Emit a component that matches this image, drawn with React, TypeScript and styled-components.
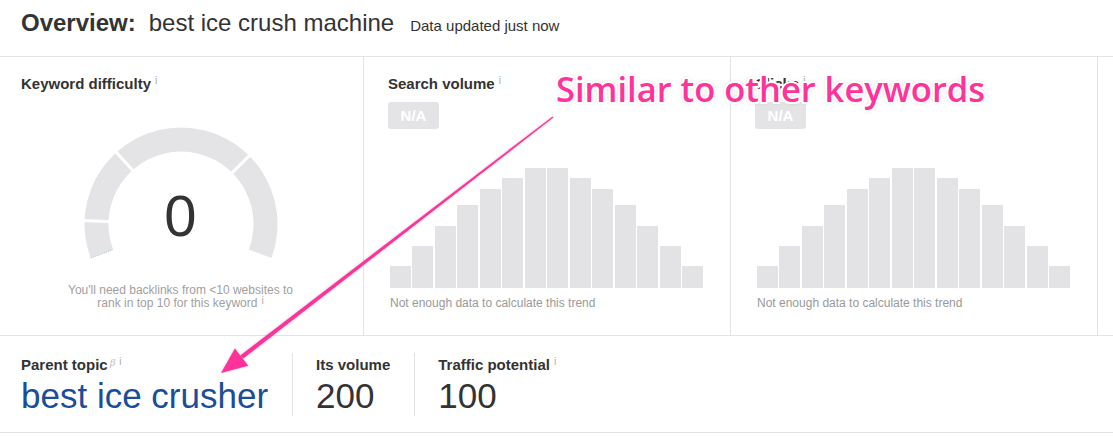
import React from "react";
import styled, { createGlobalStyle } from "styled-components";

const GlobalStyle = createGlobalStyle`
  html, body { margin: 0; padding: 0; background: #ffffff; }
  body { font-family: "Liberation Sans", Arial, sans-serif; color: #333333; }
  * { box-sizing: border-box; }
`;

const LINE = "#e3e3e3";
const BAR = "#e3e3e5";
const PINK = "#ff339a";

const Page = styled.div`
  position: relative;
  width: 1113px;
  height: 437px;
  overflow: hidden;
  background: #fff;
`;

const Header = styled.header`
  display: flex;
  align-items: baseline;
  height: 57px;
  padding: 9px 0 0 21px;
  border-bottom: 1px solid ${LINE};
  line-height: 27px;
`;

const TitleLabel = styled.span`
  font-size: 24px;
  font-weight: 700;
  color: #333;
`;

const TitleKeyword = styled.span`
  font-size: 24px;
  margin-left: 13px;
  color: #333;
`;

const TitleNote = styled.span`
  font-size: 15px;
  margin-left: 16px;
  color: #333;
`;

const PanelRow = styled.section`
  display: grid;
  grid-template-columns: 363px 367px 367px 1fr;
  height: 279px;
  border-bottom: 1px solid ${LINE};
`;

const Panel = styled.div<{ $first?: boolean; $center?: boolean }>`
  display: flex;
  flex-direction: column;
  align-items: ${(p) => (p.$center ? "stretch" : "flex-start")};
  padding: 18px ${(p) => (p.$first ? "23px" : "20px")} 0
    ${(p) => (p.$first ? "21px" : "24px")};
  border-left: ${(p) => (p.$first ? "none" : `1px solid ${LINE}`)};
`;

const PanelTitle = styled.div`
  font-size: 15px;
  line-height: 18px;
  font-weight: 700;
  color: #333;
  white-space: nowrap;
`;

const Info = styled.sup`
  font-size: 10px;
  font-weight: 400;
  color: #aaa;
  margin-left: 4px;
  vertical-align: top;
  position: relative;
  top: -3px;
`;

const GaugeWrap = styled.div`
  position: relative;
  align-self: center;
  width: 200px;
  height: 140px;
  margin-top: 31px;
`;

const GaugeValue = styled.div`
  position: absolute;
  top: 63px;
  left: 0;
  right: 0;
  text-align: center;
  font-size: 58px;
  line-height: 58px;
  color: #333;
`;

const GaugeNote = styled.p`
  margin: 20px 0 0;
  text-align: center;
  font-size: 12px;
  line-height: 13px;
  color: #a0a0a0;
`;

const NABadge = styled.div`
  margin-top: 9px;
  width: 51px;
  height: 27px;
  border-radius: 3px;
  background: #e4e4e6;
  color: #fff;
  font-weight: 700;
  font-size: 15px;
  line-height: 27px;
  text-align: center;
`;

const Chart = styled.div`
  display: flex;
  align-items: flex-end;
  gap: 1.5px;
  width: 313px;
  height: 121px;
  margin: 38px 0 0 2px;
`;

const Bar = styled.div`
  flex: 1;
  background: ${BAR};
`;

const Caption = styled.div`
  margin-top: 8px;
  margin-left: 2px;
  font-size: 12px;
  line-height: 14px;
  color: #999;
`;

const MetricsRow = styled.section`
  display: flex;
  padding: 17px 0 16px;
  border-bottom: 1px solid ${LINE};
`;

const Metric = styled.div<{ $first?: boolean }>`
  display: flex;
  flex-direction: column;
  height: 63px;
  padding: 3px 24px 0 ${(p) => (p.$first ? "21px" : "23px")};
  border-left: ${(p) => (p.$first ? "none" : `1px solid ${LINE}`)};
`;

const MetricLabel = styled.div`
  font-size: 15px;
  line-height: 18px;
  font-weight: 700;
  color: #333;
  white-space: nowrap;
`;

const Beta = styled.span`
  font-family: "Liberation Serif", serif;
  font-style: italic;
  font-weight: 400;
  font-size: 11px;
  color: #bbb;
  vertical-align: top;
  position: relative;
  top: -3px;
  margin-left: 2px;
`;

const MetricValue = styled.div<{ $link?: boolean }>`
  margin-top: 2px;
  font-size: 35px;
  line-height: 40px;
  white-space: nowrap;
  color: ${(p) => (p.$link ? "#1b4d99" : "#333")};
`;

const Callout = styled.div`
  position: absolute;
  left: 556px;
  top: 69px;
  font-family: "Open Sans", "Noto Sans", sans-serif;
  font-weight: 600;
  font-size: 34.5px;
  line-height: 40px;
  color: ${PINK};
  white-space: nowrap;
  text-shadow: 2px 0 0 #fff, -2px 0 0 #fff, 0 2px 0 #fff, 0 -2px 0 #fff,
    1.5px 1.5px 0 #fff, -1.5px 1.5px 0 #fff, 1.5px -1.5px 0 #fff,
    -1.5px -1.5px 0 #fff, 0 0 5px rgba(0, 0, 0, 0.25);
`;

const Overlay = styled.svg`
  position: absolute;
  left: 0;
  top: 0;
  pointer-events: none;
`;

const bars = [22, 42, 62, 83, 99, 110, 120, 120, 110, 99, 83, 62, 42, 22];

function TrendChart() {
  return (
    <Chart>
      {bars.map((h, i) => (
        <Bar key={i} style={{ height: h }} />
      ))}
    </Chart>
  );
}

function Gauge() {
  const seg = (a: number, r1: number, r2: number) => {
    const rad = (a * Math.PI) / 180;
    return {
      x1: 100 + r1 * Math.cos(rad),
      y1: 100 - r1 * Math.sin(rad),
      x2: 100 + r2 * Math.cos(rad),
      y2: 100 - r2 * Math.sin(rad),
    };
  };
  return (
    <GaugeWrap>
      <svg width="200" height="140" viewBox="0 0 200 140">
        <path
          d="M 9.7 134 A 96.5 96.5 0 1 1 190.3 134 L 167.9 125.5 A 72.5 72.5 0 1 0 32.1 125.5 Z"
          fill="#e4e4e6"
        />
        {[178, 132, 45].map((a) => (
          <line key={a} {...seg(a, 68, 100)} stroke="#fff" strokeWidth="3" />
        ))}
        <line x1="10" y1="134" x2="32.5" y2="125.5" stroke="#7fc4bb" strokeWidth="0.8" strokeDasharray="1 1" />
      </svg>
      <GaugeValue>0</GaugeValue>
    </GaugeWrap>
  );
}

export default function App() {
  return (
    <>
      <GlobalStyle />
      <Page>
        <Header>
          <TitleLabel>Overview:</TitleLabel>
          <TitleKeyword>best ice crush machine</TitleKeyword>
          <TitleNote>Data updated just now</TitleNote>
        </Header>

        <PanelRow>
          <Panel $first $center>
            <PanelTitle>
              Keyword difficulty<Info>i</Info>
            </PanelTitle>
            <Gauge />
            <GaugeNote>
              You'll need backlinks from &lt;10 websites to
              <br />
              rank in top 10 for this keyword<Info>i</Info>
            </GaugeNote>
          </Panel>
          <Panel>
            <PanelTitle>
              Search volume<Info>i</Info>
            </PanelTitle>
            <NABadge>N/A</NABadge>
            <TrendChart />
            <Caption>Not enough data to calculate this trend</Caption>
          </Panel>
          <Panel>
            <PanelTitle>
              Clicks<Info>i</Info>
            </PanelTitle>
            <NABadge>N/A</NABadge>
            <TrendChart />
            <Caption>Not enough data to calculate this trend</Caption>
          </Panel>
          <Panel />
        </PanelRow>

        <MetricsRow>
          <Metric $first>
            <MetricLabel>
              Parent topic<Beta>β</Beta>
              <Info>i</Info>
            </MetricLabel>
            <MetricValue $link>best ice crusher</MetricValue>
          </Metric>
          <Metric>
            <MetricLabel>Its volume</MetricLabel>
            <MetricValue>200</MetricValue>
          </Metric>
          <Metric>
            <MetricLabel>
              Traffic potential<Info>i</Info>
            </MetricLabel>
            <MetricValue>100</MetricValue>
          </Metric>
        </MetricsRow>

        <Overlay width="1113" height="437" viewBox="0 0 1113 437">
          <defs>
            <filter id="arrowShadow" x="-10%" y="-10%" width="120%" height="120%">
              <feDropShadow dx="0" dy="0" stdDeviation="1" floodColor="#000" floodOpacity="0.25" />
            </filter>
          </defs>
          <g fill={PINK} filter="url(#arrowShadow)">
            <polygon points="553.4,117.6 552.6,116.4 240.3,355.4 242.9,358.8" />
            <polygon points="221,373 248.3,365.8 234.9,348.4" />
          </g>
        </Overlay>
        <Callout>Similar to other keywords</Callout>
      </Page>
    </>
  );
}
